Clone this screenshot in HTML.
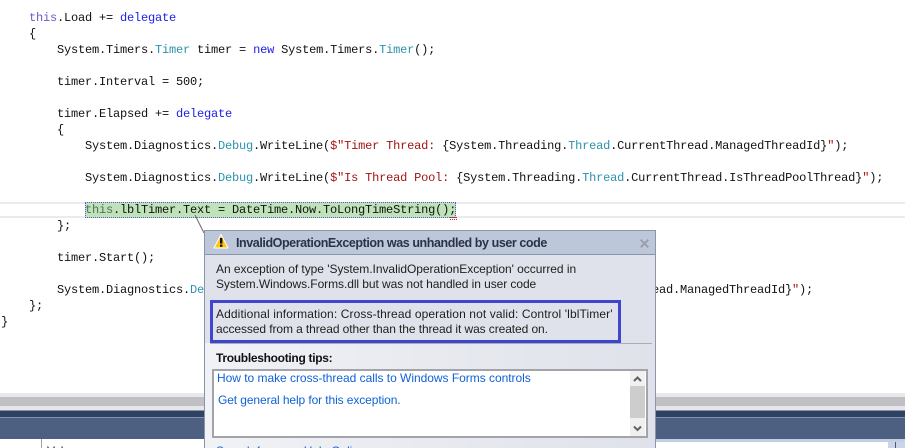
<!DOCTYPE html>
<html><head><meta charset="utf-8">
<style>
html,body{margin:0;padding:0;background:#fff}
#p{position:relative;width:905px;height:448px;overflow:hidden;background:#fff}
.a{position:absolute}
.c{position:absolute;white-space:pre;font:12px/16px "Liberation Mono",monospace;letter-spacing:-.2px;color:#111;height:16px}
.k{color:#2020e8}.t{color:#2b91af}.s{color:#a31515}.v{color:#6a5acd}
.u{position:absolute;white-space:pre;font:12px/16px "Liberation Sans",sans-serif;color:#1e1e1e}
.l{color:#0f62d6}
</style></head><body><div id="p">
<div class="c" style="left:29px;top:10px"><span class="v">this</span>.Load += <span class="k">delegate</span></div>
<div class="c" style="left:29px;top:26px">{</div>
<div class="c" style="left:57px;top:42px">System.Timers.<span class="t">Timer</span> timer = <span class="k">new</span> System.Timers.<span class="t">Timer</span>();</div>
<div class="c" style="left:57px;top:74px">timer.Interval = 500;</div>
<div class="c" style="left:57px;top:106px">timer.Elapsed += <span class="k">delegate</span></div>
<div class="c" style="left:57px;top:122px">{</div>
<div class="c" style="left:85px;top:138px">System.Diagnostics.<span class="t">Debug</span>.WriteLine(<span class="s">$"Timer Thread: </span>{System.Threading.<span class="t">Thread</span>.CurrentThread.ManagedThreadId}<span class="s">"</span>);</div>
<div class="c" style="left:85px;top:170px">System.Diagnostics.<span class="t">Debug</span>.WriteLine(<span class="s">$"Is Thread Pool: </span>{System.Threading.<span class="t">Thread</span>.CurrentThread.IsThreadPoolThread}<span class="s">"</span>);</div>
<div class="a" style="left:0;top:202px;width:905px;height:2px;background:#eaeaf0"></div>
<div class="a" style="left:0;top:216px;width:905px;height:2px;background:#eaeaf0"></div>
<div class="a" style="left:85px;top:202px;width:369px;height:14px;background:#bfe2b8;border:1px dotted #5a5ad0"></div>
<div class="c" style="left:85px;top:202px"><span style="color:#55705a">this</span>.lblTimer.Text = DateTime.Now.ToLongTimeString();</div>
<div class="a" style="left:450px;top:217px;width:5px;height:1px;border:1px dotted #e02020;border-top-color:#e02020"></div>
<div class="c" style="left:57px;top:218px">};</div>
<div class="c" style="left:57px;top:250px">timer.Start();</div>
<div class="c" style="left:57px;top:282px">System.Diagnostics.<span class="t">De</span></div>
<div class="c" style="left:652px;top:282px">ead.ManagedThreadId}<span class="s">"</span>);</div>
<div class="c" style="left:29px;top:298px">};</div>
<div class="c" style="left:1px;top:314px">}</div>

<div class="a" style="left:0;top:393px;width:905px;height:4px;background:#e8e8ec"></div>
<div class="a" style="left:0;top:397px;width:905px;height:9px;background:#c0c0c4"></div>
<div class="a" style="left:0;top:406px;width:905px;height:4px;background:#e6e6ea"></div>
<div class="a" style="left:0;top:410px;width:905px;height:1px;background:#8592ad"></div>
<div class="a" style="left:0;top:411px;width:905px;height:6px;background:#2f4261"></div>
<div class="a" style="left:0;top:417px;width:905px;height:1px;background:#8592ad"></div>
<div class="a" style="left:0;top:418px;width:905px;height:21px;background:#4d6082"></div>
<div class="a" style="left:41px;top:439px;width:1px;height:9px;background:#a0a0a8"></div>
<div class="u" style="left:47px;top:443px">Value</div>
<div class="a" style="left:655px;top:439px;width:250px;height:3px;background:#c4cfe4"></div>
<div class="a" style="left:888px;top:442px;width:17px;height:6px;background:#ccd5e8"></div>
<div class="a" style="left:895px;top:442px;width:1px;height:6px;background:#556"></div>

<svg class="a" style="left:190px;top:215px" width="20" height="20"><path d="M5 0L14 18" stroke="#666" stroke-width="1" fill="none"/></svg>

<div class="a" style="left:204px;top:230px;width:450px;height:218px;border:1px solid #8a94aa;border-bottom:0;background:linear-gradient(90deg,#f1f2f6,#dfe2ea)"></div>
<div class="a" style="left:205px;top:231px;width:450px;height:23px;background:#bcc7d9;border-bottom:1px solid #8a94aa"></div>
<div class="a" style="left:205px;top:255px;width:450px;height:88px;background:#dfe2ea"></div>
<svg class="a" style="left:212px;top:232px" width="18" height="18"><path d="M9 2.5L16 16H2Z" fill="#fcc60a" stroke="#fff" stroke-width="1" stroke-linejoin="round"/><rect x="8" y="6" width="2.4" height="5.6" fill="#111"/><rect x="8" y="12.6" width="2.4" height="2.2" fill="#111"/></svg>
<div class="u" style="left:236px;top:235px;font-size:12.5px;font-weight:bold;color:#29324a;letter-spacing:-.42px">InvalidOperationException was unhandled by user code</div>
<svg class="a" style="left:640px;top:239px" width="9" height="9"><path d="M.7 .7L8.3 8.3M8.3 .7L.7 8.3" stroke="#9a9fa9" stroke-width="2"/></svg>
<div class="u" style="left:216px;top:261px;letter-spacing:-.04px">An exception of type 'System.InvalidOperationException' occurred in</div>
<div class="u" style="left:216px;top:276px;letter-spacing:-.07px">System.Windows.Forms.dll but was not handled in user code</div>
<div class="a" style="left:210px;top:343px;width:442px;height:1px;background:#a9adb8"></div>
<div class="a" style="left:210px;top:300px;width:405px;height:37px;border:3px solid #3d46cc"></div>
<div class="u" style="left:216px;top:306px;letter-spacing:.11px">Additional information: Cross-thread operation not valid: Control 'lblTimer'</div>
<div class="u" style="left:216px;top:321px;letter-spacing:-.09px">accessed from a thread other than the thread it was created on.</div>
<div class="u" style="left:216px;top:350px;font-weight:bold;color:#111;letter-spacing:-.3px">Troubleshooting tips:</div>
<div class="a" style="left:212px;top:369px;width:432px;height:65px;border:2px solid #a2a4aa;background:#fff"></div>
<div class="a" style="left:630px;top:371px;width:15px;height:65px;background:#f0f0f0"></div>
<div class="a" style="left:630px;top:386px;width:15px;height:32px;background:#cdcdcd"></div>
<svg class="a" style="left:630px;top:371px" width="15" height="65"><path d="M4 10L7.5 6.5L11 10M4 55.5L7.5 59L11 55.5" stroke="#606060" stroke-width="2" fill="none"/></svg>
<div class="u l" style="left:217px;top:370px;letter-spacing:-.03px">How to make cross-thread calls to Windows Forms controls</div>
<div class="u l" style="left:218px;top:392px;letter-spacing:-.1px">Get general help for this exception.</div>
<div class="u l" style="left:216px;top:443px;letter-spacing:-.1px">Search for more Help Online...</div>
</div></body></html>
